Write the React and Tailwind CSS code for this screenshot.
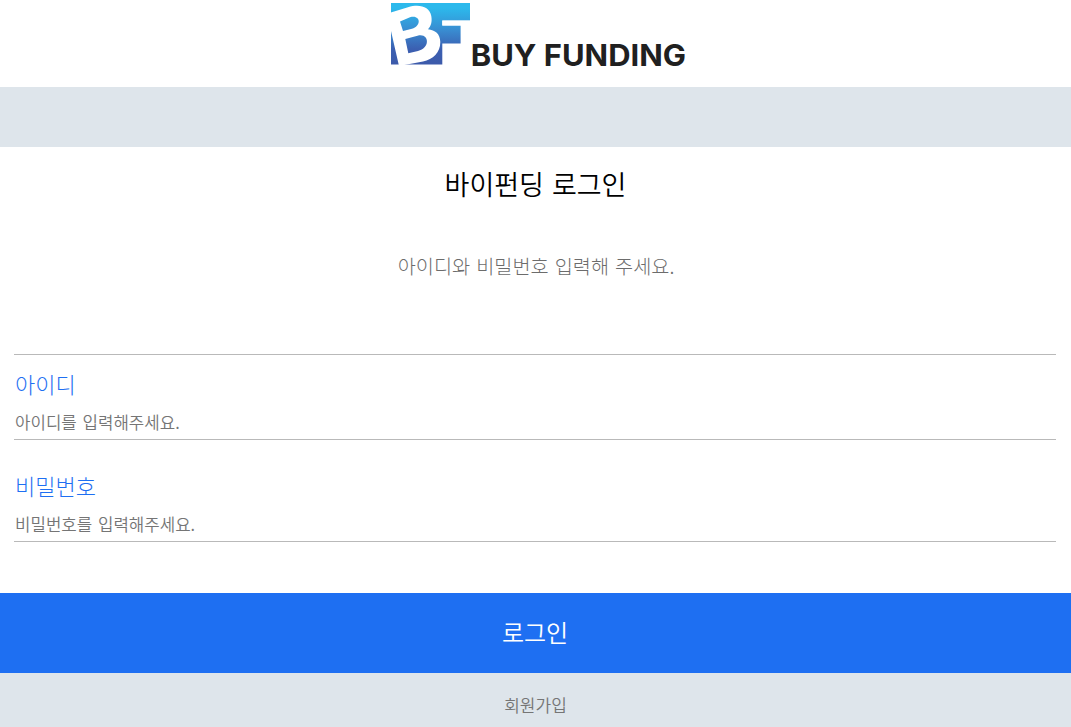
import React, { useState } from 'react';

function Logo() {
  return (
    <svg width="301" height="76" viewBox="0 0 301 76" role="img" aria-label="BUY FUNDING">
      <defs>
        <linearGradient id="logoFill" x1="0" y1="0" x2="0" y2="1">
          <stop offset="0.08" stopColor="#2cb9ec" />
          <stop offset="0.45" stopColor="#398bd0" />
          <stop offset="0.75" stopColor="#3b5fb1" />
          <stop offset="1" stopColor="#3c5aaa" />
        </linearGradient>
      </defs>
      <path d="M1 3H80V20.6H52.3V25.5H70.6V43.5H52.3V64.5H1Z" fill="url(#logoFill)" />
      <path d="M52.3 20.6H80V25.5H52.3Z" fill="#fff" />
      <path
        fill="#fff"
        fillRule="evenodd"
        d="M0 12.7L18 7.3C30 3.7 39.5 7 41.3 16C42.3 22 41 26 38 29.3C45 30 50.3 34 50.3 42C50.3 53 43 59 33 61.5L9 66L1 31ZM10 21.5L13 31L22 28.7C32 25.8 30.5 14.2 20 17.2ZM15.3 39L18.3 53.3L28 51.1C41 48 39 32.5 27.5 35.8Z"
      />
      {/* wordmark */}
      <text
        x="80.7"
        y="66"
        textLength="215.3"
        lengthAdjust="spacingAndGlyphs"
        className="fill-[#202020] font-[Inter,sans-serif] text-[30px] font-bold"
      >
        BUY FUNDING
      </text>
    </svg>
  );
}

function Field({ label, className, ...props }) {
  return (
    <div className={`border-b border-[#b9b9b9] ${className}`}>
      <label htmlFor={props.id} className="block text-[22px] leading-[32px] font-light text-[#1e6ff2]">
        {label}
      </label>
      <input
        {...props}
        className="mt-[9px] mb-[3px] block h-[28px] w-full bg-transparent text-[16.8px] outline-none [word-spacing:2px] placeholder:text-[#757575]"
      />
    </div>
  );
}

export default function App() {
  const [id, setId] = useState('');
  const [password, setPassword] = useState('');

  return (
    <div className="flex h-[727px] flex-col overflow-hidden bg-white font-['Noto_Sans_CJK_KR',sans-serif] font-[350]">
      <header className="flex h-[87px] shrink-0 items-start justify-center pl-[10px]">
        <Logo />
      </header>
      <div className="h-[60px] shrink-0 bg-[#dee5eb]" />

      <form className="flex flex-1 flex-col" onSubmit={(e) => e.preventDefault()}>
        <h1 className="mt-[17px] text-center text-[27px] leading-[40px] font-[350] text-black [word-spacing:2px]">
          바이펀딩 로그인
        </h1>
        <p className="mt-[47px] pl-px text-center text-[19.7px] leading-[30px] font-light text-[#6c6c6c] [word-spacing:1.7px]">
          아이디와 비밀번호 입력해 주세요.
        </p>

        <div className="mt-[73px] mr-[15px] ml-[14px] border-t border-[#b9b9b9]">
          <Field
            id="userId"
            label="아이디"
            placeholder="아이디를 입력해주세요."
            value={id}
            onChange={(e) => setId(e.target.value)}
            className="pt-[12px] pl-px"
          />
          <Field
            id="password"
            type="password"
            label="비밀번호"
            placeholder="비밀번호를 입력해주세요."
            value={password}
            onChange={(e) => setPassword(e.target.value)}
            className="pt-[29px] pl-px"
          />
        </div>

        <button type="submit" className="mt-auto h-[80px] shrink-0 bg-[#1e6ff2] pr-px pb-[2px] text-[24px] text-white">
          로그인
        </button>
        <a href="#" className="flex h-[54px] shrink-0 items-center justify-center bg-[#dee5eb] pt-[9px] text-[17px] text-[#757575]">
          회원가입
        </a>
      </form>
    </div>
  );
}
